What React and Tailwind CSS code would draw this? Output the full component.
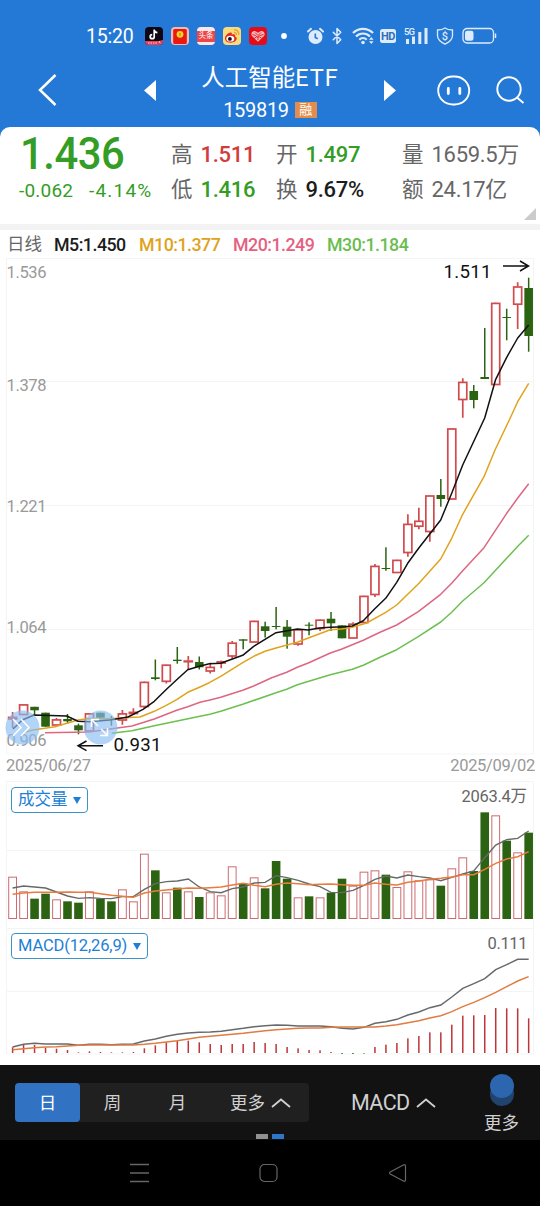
import React from 'react';
import { Bluetooth } from 'lucide-react';

const STEP = 10.98;
const X0 = 12.6;
const xAt = (i) => X0 + i * STEP;

const RED = '#d14b4e';
const GREEN = '#2c6313';

// [direction, high, body top, body bottom, low]
const CANDLES = [
  ['up', 712, 717, 719, 728], ['up', 704.5, 704.5, 714.5, 714.5], ['down', 706.8, 706.8, 710.3, 714.7],
  ['down', 712.7, 712.7, 726.7, 726.7], ['up', 718, 719.5, 725, 725], ['down', 714, 719, 721.3, 723.7],
  ['down', 723.7, 725.3, 730.3, 734.3], ['up', 713, 713.5, 731, 731], ['down', 712.7, 712.7, 717.7, 717.7],
  ['down', 716, 718, 719.3, 725.7], ['up', 710, 713.5, 720, 724.7], ['up', 708.3, 712, 713.5, 715],
  ['up', 681.5, 682, 706.5, 708], ['down', 659.5, 677.3, 679, 680.3], ['up', 664.5, 664.8, 681.3, 683.5],
  ['down', 647, 659.7, 661, 663.7], ['up', 656, 660.7, 661.7, 669.3], ['down', 656.5, 662, 667.3, 669.5],
  ['up', 662.7, 667, 671, 673.5], ['up', 660.5, 661.5, 663, 668.3], ['up', 641, 642.8, 656, 658.7],
  ['down', 639.3, 639.3, 640.7, 649.3], ['up', 620.7, 621, 642, 642], ['down', 621.7, 626.3, 631, 637.5],
  ['down', 607, 626, 627, 629.3], ['down', 620, 626.7, 636.7, 648.7], ['up', 629, 629.5, 644, 645.7],
  ['down', 622.3, 624.7, 625.7, 635.3], ['up', 619.3, 619.8, 628.5, 631], ['down', 612, 618.7, 623.3, 631],
  ['down', 625.3, 625.3, 638.3, 638.3], ['up', 622.3, 623.8, 638, 638], ['up', 595.7, 596, 622.5, 622.5],
  ['up', 564, 566, 594.5, 597], ['down', 547.3, 568, 569, 570.7], ['up', 559.7, 560, 572.5, 572.5],
  ['up', 514.3, 524, 552.5, 556.7], ['up', 507.7, 520.9, 526.2, 529.3], ['up', 495.3, 495.6, 531.5, 541.7],
  ['down', 479, 495, 499, 506.7], ['up', 428.3, 428.6, 499, 499], ['up', 378.3, 382, 399.5, 417.7],
  ['down', 385, 391, 400, 408.3], ['down', 328, 377, 379, 379], ['up', 302.7, 303, 384.5, 384.5],
  ['down', 308.7, 317, 318, 340.3], ['up', 282.3, 286.6, 304.2, 329], ['down', 277.7, 288, 336, 351.7],
];

const M5 = '13,729 22.3,720 34,715 66.7,716 78,721.3 89,721.7 110,720 128,717 143,709.3 154.3,701.3 165.7,690 176.7,679.7 187.7,669.7 198.5,666.5 209.3,663.7 220.7,663.3 231.7,659.3 242.7,655.3 253.7,646.3 276,632.7 297.3,629 308.3,630 319.3,628 330.3,627.3 345,626.7 352.3,626 363.3,620.7 374.3,609.3 385.7,598.3 396.7,582.3 407.7,563.3 419,547.7 440.7,520 451.7,493.3 462.7,465 484.7,418 495.7,379.3 506.7,357.3 517.7,338 528.7,325';
const M10 = '25,732 33,730 55,726.7 78,720 89,718.5 110,718.7 128,717.5 140,717 154.3,711.3 165.7,705.7 176.7,699.7 187.7,692.3 198.3,687.7 209.3,682.7 220.7,676.3 242.7,662.7 253.7,656.3 265,651.3 276,648 297.3,642.3 308.3,638 330.3,629.7 341.3,629 352.3,627.3 366.7,623 385.7,612.3 396.7,605 419,583.3 440.7,559 451.7,538.3 462.7,514.3 484,476.7 495,450 509.3,420 517.7,401.7 528.7,383.3';
const M20 = '45,732.7 89,732 110,729 132,726 154.3,719 176.7,710.3 187.7,706.7 200,702.3 210,700 220.7,697.3 242.7,690.3 253.7,686 271.7,677.7 286.7,672.3 297.3,667.3 308.3,663 330.3,653 341.3,649.3 363.3,640.3 380,632.3 396.7,625 418.3,611.7 440.7,594.3 451.7,583.3 462.7,570.7 484,547.7 506.7,513.3 518.3,497.3 528.7,483.7';
const M30 = '111.7,733.3 132,730.7 154.3,725.7 200,716.3 210,714.3 220.7,711.3 242.7,704.3 276,692.7 286.7,689.3 297.3,684.7 330.3,674.7 352.3,669.3 363.3,665.3 380,657.3 396.7,649.7 418.3,636.7 440.7,622 451.7,612.3 462.7,601 484,582.7 518.3,545.7 528.7,535.3';

// heights above each baseline, in thirds of a pixel
const VOLUME = [127, 83, 61, 76, 59, 53, 49, 83, 61, 53, 89, 53, 196, 146, 80, 94, 83, 66, 80, 71, 158, 106, 125, 92, 174, 121, 65, 68, 65, 79, 121, 100, 142, 146, 133, 96, 143, 116, 119, 100, 152, 185, 144, 320, 311, 235, 200, 259];
const VOL_MA5 = [93, 99, 96, 93, 81, 69, 62, 64, 62, 61, 67, 67, 89, 106, 112, 114, 120, 96, 82, 79, 91, 96, 108, 110, 130, 124, 116, 105, 97, 80, 79, 86, 101, 119, 129, 123, 132, 127, 123, 115, 125, 135, 144, 184, 222, 238, 242, 264];
const VOL_MA10 = [74, 78, 80, 80, 80, 81, 80, 80, 76, 71, 68, 65, 78, 84, 87, 90, 93, 92, 94, 96, 102, 107, 101, 97, 104, 108, 106, 103, 104, 105, 103, 101, 101, 108, 104, 102, 110, 114, 119, 122, 126, 133, 133, 149, 167, 180, 187, 202];
const HIST = [17, 24, 24, 16, 13, 9, 2, 5, 3, 2, 2, 3, 14, 23, 32, 37, 37, 32, 27, 24, 27, 27, 33, 30, 27, 18, 14, 9, 8, 3, -3, -3, -2, 18, 25, 30, 44, 51, 62, 62, 85, 112, 113, 114, 135, 134, 134, 104];
const DIF = [18, 26, 29, 27, 27, 27, 23, 26, 26, 25, 26, 27, 36, 42, 50, 56, 60, 62, 63, 65, 70, 74, 79, 82, 84, 83, 81, 81, 81, 79, 74, 72, 77, 89, 94, 101, 114, 123, 136, 144, 168, 194, 208, 223, 250, 265, 281, 281];
const DEA = [10, 13, 16, 18, 19, 21, 23, 24, 24, 24, 24, 24, 26, 29, 33, 37, 42, 47, 50, 53, 56, 59, 63, 67, 70, 72, 74, 75, 75, 77, 78, 78, 78, 78, 81, 85, 91, 97, 105, 112, 124, 139, 152, 166, 182, 199, 216, 229];

const toPoints = (values, base) => values.map((v, i) => `${xAt(i)},${base - v / 3}`).join(' ');

function StatusBar() {
  return (
    <div className="flex h-[54px] items-center pt-[18px] pl-[86px] text-white">
      <span className="w-[59px] pt-[2px] text-[19.5px] leading-none tracking-[-0.2px]">15:20</span>
      <div className="flex gap-2">
        <svg width="18" height="18" viewBox="0 0 18 18">
          <rect width="18" height="18" rx="4" fill="#0d0714" />
          <path d="M9.2 2.5v7.2a2 2 0 1 1-2-2M9.2 2.8c.3 1.8 1.4 2.6 3.2 2.8" fill="none" stroke="#fff" strokeWidth="1.7" />
          <path d="M0 14h14l4-1v1a4 4 0 0 1-4 4H4a4 4 0 0 1-4-4z" fill="#ee3b55" />
          <path d="M3 16h9M14 14.5l2 2" stroke="#fbd5dc" strokeWidth="1.1" strokeDasharray="1.5 1" />
        </svg>
        <svg width="18" height="18" viewBox="0 0 18 18">
          <rect width="18" height="18" rx="4" fill="#f4b8ae" />
          <rect x="2.2" y="2" width="13.6" height="15" rx="1.5" fill="#e8190e" />
          <circle cx="9" cy="7.3" r="3.4" fill="#fcd22c" />
          <path d="M8 5.8l1 1.5 1-1.5M9 7.3v2M8 7.8h2" stroke="#c58a10" strokeWidth=".7" fill="none" />
        </svg>
        <div className="flex h-[18px] w-[18px] items-center overflow-hidden rounded-[4px] bg-[#f9e9ea]">
          <span className="flex h-[11px] w-full items-center justify-center bg-[#ee4547] text-[7.5px] leading-none">头条</span>
        </div>
        <svg width="18" height="18" viewBox="0 0 18 18">
          <rect width="18" height="18" rx="4" fill="#fadb7c" />
          <path d="M2 11.3C2.2 8 6.4 4.7 8.3 5.6c.8.4.5 1.5.3 2 1.5-.6 3.3-.7 3.5.6.1.7-.2 1.2 0 1.4 3 1 2 5.9-4.5 6.1C4.2 15.7 1.9 13.8 2 11.3z" fill="#e02a22" />
          <ellipse cx="7.3" cy="11.7" rx="4" ry="2.9" fill="#fff" />
          <circle cx="6.9" cy="11.9" r="1.9" fill="#161010" />
          <path d="M11 5.5c1.7-.2 2.7.9 2.4 2.5M11 3c3.2-.4 5.3 2 4.7 5" stroke="#ee9a2e" strokeWidth="1.2" fill="none" />
        </svg>
        <svg width="18" height="18" viewBox="0 0 18 18">
          <rect width="18" height="18" rx="4" fill="#e70b18" />
          <path d="M9 14.8L3 9C1.4 6.8 3 4 5.3 4 7 4 8.3 5 9 6c.7-1 2-2 3.7-2C15 4 16.6 6.8 15 9z" fill="#f7b8b4" />
          <path d="M3.5 7.5l3 1 2 2 2.5-2 3.5-1M6 5.5l3 3 3-3M5.5 11l2-1M12.5 11l-2-1M9 9v4" stroke="#e31622" strokeWidth=".9" fill="none" />
        </svg>
      </div>
      <svg className="ml-3.5" width="6" height="6"><circle cx="3" cy="3" r="2.9" fill="#fff" /></svg>
      <svg className="ml-5" width="17" height="18" viewBox="0 0 17 18">
        <circle cx="8.5" cy="10" r="7" fill="#deebfb" />
        <path d="M1 4.5L4 1.8M16 4.5l-3-2.7" stroke="#deebfb" strokeWidth="2" strokeLinecap="round" />
        <path d="M8.3 6.5v4l2.4 1.3" stroke="#2478d6" strokeWidth="1.6" fill="none" />
      </svg>
      <Bluetooth className="ml-[4px] text-[#deebfb]" size={18} strokeWidth={2} />
      <svg className="ml-[6px]" width="23" height="18" viewBox="0 0 23 18" fill="none" stroke="#deebfb" strokeWidth="2.2">
        <path d="M1 6C6.5.4 15.500.4 21 6" />
        <path d="M4 9.5c4-4 10-4 14 0" />
        <path d="M7.3 12.8c2.2-2.2 5.2-2.2 7.400 0" />
        <circle cx="11" cy="15.5" r="1.8" fill="#deebfb" stroke="none" />
        <path d="M17 12.800l2.300-2.800 2.300 2.800zM17 14.300l2.300 2.800 2.300-2.800z" fill="#deebfb" stroke="none" />
      </svg>
      <span className="ml-[5px] flex h-[14px] w-4 items-center justify-center rounded-[2.5px] bg-[#deebfb] text-[11px] leading-none font-bold tracking-[-0.5px] text-[#2d6fb8]">HD</span>
      <svg className="ml-2" width="24" height="18" viewBox="0 0 24 18" fill="#deebfb">
        <text x="0" y="8" fontSize="9.5" fontWeight="600" textLength="11">5G</text>
        <rect x="2" y="12" width="3" height="5" /><rect x="8" y="9.5" width="3" height="7.5" />
        <rect x="14.3" y="5" width="3" height="12" /><rect x="20.5" y="1" width="3" height="16" />
      </svg>
      <svg className="ml-[8px]" width="18" height="18" viewBox="0 0 18 18" fill="none" stroke="#deebfb" strokeWidth="1.3">
        <path d="M9 1c2 1.5 4.5 2 7.5 2v5.500c0 4-3 6.500-7.500 8.700-4.500-2.200-7.500-4.700-7.500-8.700V3C4.500 3 7 2.500 9 1z" />
        <text x="9" y="12.800" textAnchor="middle" fontSize="11" fontWeight="500" fill="#deebfb" stroke="none">$</text>
      </svg>
      <svg className="ml-[8px]" width="35" height="18" viewBox="0 0 35 18">
        <rect x="1" y="1.5" width="30.5" height="14.5" rx="4" fill="none" stroke="#deebfb" strokeWidth="1.3" />
        <rect x="3" y="3.8" width="8.5" height="10" rx="2.2" fill="#deebfb" />
        <path d="M33.500 6.500v4.500" stroke="#deebfb" strokeWidth="1.5" />
      </svg>
    </div>
  );
}

function Header() {
  return (
    <header className="flex h-[73px] items-start text-white">
      <svg className="mt-[19px] ml-[37px]" width="20" height="34" viewBox="0 0 20 34">
        <path d="M18.500 2L3 17l15.500 15" fill="none" stroke="#fff" strokeWidth="2.5" />
      </svg>
      <svg className="mt-[26px] ml-[87px]" width="12" height="21"><path d="M12 0v21L0 10.500z" fill="#fff" /></svg>
      <div className="ml-[34px] flex w-[160px] flex-col items-center">
        <h1 className="mt-[9px] text-[23.5px] leading-[30px] whitespace-nowrap">人工智能<span className="tracking-[0.9px]">ETF</span></h1>
        <div className="mt-[5px] flex items-center gap-[6px]">
          <span className="pt-px text-[20px] leading-[22px] tracking-[-0.3px]">159819</span>
          <span className="flex h-[16px] w-[22px] items-center justify-center bg-[#e28d4c] text-[13px] leading-none">融</span>
        </div>
      </div>
      <svg className="mt-[26px] ml-[34px]" width="12" height="21"><path d="M0 0v21l12-10.500z" fill="#fff" /></svg>
      <svg className="mt-[21px] ml-[41px]" width="34" height="32" viewBox="0 0 34 32" fill="none" stroke="#fff">
        <rect x="1.2" y="1.5" width="31" height="28" rx="14.5" strokeWidth="1.9" />
        <path d="M11.300 13.500v5M22.800 13.500v5" strokeWidth="2.8" strokeLinecap="round" />
      </svg>
      <svg className="mt-[22px] ml-[25px]" width="30" height="30" viewBox="0 0 30 30" fill="none" stroke="#fff" strokeWidth="1.9">
        <circle cx="13" cy="13" r="11.7" />
        <path d="M21 21.500l6.500 5.500" />
      </svg>
    </header>
  );
}

function Stat({ label, value, color }) {
  return (
    <div className="flex h-[35px] items-center gap-[8px] whitespace-nowrap">
      <span className="text-[21.5px] leading-none text-[#666]">{label}</span>
      <span className={`text-[22px] leading-none tracking-[-0.3px] ${color}`}>{value}</span>
    </div>
  );
}

function Quote() {
  return (
    <section className="relative flex h-[97px] items-start rounded-t-[10px] bg-white">
      <div className="ml-[19px] w-[152px] text-[#349d26]">
        <div className="mt-[5px] ml-px origin-left scale-x-[0.93] text-[45px] leading-[43px] font-medium tracking-[-0.5px]">1.436</div>
        <div className="mt-[5px] flex text-[19px] leading-[22px]">
          <span className="w-[70px] shrink-0 tracking-[0.2px]">-0.062</span>
          <span className="tracking-[1.2px]">-4.14%</span>
        </div>
      </div>
      <div className="mt-[10px] w-[105px]">
        <Stat label="高" value="1.511" color="font-medium text-[#d13c3c]" />
        <Stat label="低" value="1.416" color="font-medium text-[#349d26]" />
      </div>
      <div className="mt-[10px] w-[126px]">
        <Stat label="开" value="1.497" color="font-medium text-[#349d26]" />
        <Stat label="换" value="9.67%" color="font-medium text-[#1c1c1c]" />
      </div>
      <div className="mt-[10px]">
        <Stat label="量" value="1659.5万" color="text-[#666]" />
        <Stat label="额" value="24.17亿" color="text-[#666]" />
      </div>
      <svg className="absolute right-[4px] bottom-[4px]" width="12" height="12"><path d="M12 0v12H0z" fill="#cbcbcb" /></svg>
    </section>
  );
}

function Averages() {
  return (
    <div className="flex h-[28px] items-center pt-[2px] pl-[7px] text-[17.8px] leading-none font-medium tracking-[-0.5px] whitespace-nowrap">
      <span className="w-[47px] text-[17.5px] font-normal tracking-normal text-[#666]">日线</span>
      <span className="w-[85px] text-[#1c1c1c]">M5:1.450</span>
      <span className="w-[94px] text-[#e0a21c]">M10:1.377</span>
      <span className="w-[94px] text-[#e5617f]">M20:1.249</span>
      <span className="text-[#6abd4e]">M30:1.184</span>
    </div>
  );
}

function Candle({ data, x }) {
  const [dir, high, top, bottom, low] = data;
  if (dir === 'down') {
    return (
      <g fill={GREEN}>
        <rect x={x - 0.75} y={high} width="1.5" height={low - high} />
        <rect x={x - 4.3} y={top} width="8.6" height={bottom - top} />
      </g>
    );
  }
  return (
    <g stroke={RED} strokeWidth="1.7" fill="none">
      <path d={`M${x} ${high}V${top}M${x} ${bottom}V${low}`} />
      <rect x={x - 4} y={top + 0.4} width="8" height={Math.max(bottom - top - 0.4, 0.3)} />
    </g>
  );
}

function PriceChart() {
  const ticks = [['1.536', 278], ['1.378', 391], ['1.221', 512], ['1.064', 633], ['0.906', 746]];
  return (
    <svg className="block" width="540" height="497" viewBox="0 258 540 497">
      <g stroke="#f3f5f5" fill="none">
        <path d="M6.500 258.500h527v495.500h-527zM6 381.500h527M6 505.500h527M6 629.500h527" />
      </g>
      {CANDLES.map((c, i) => <Candle key={i} data={c} x={xAt(i)} />)}
      <g fill="none" strokeWidth="1.5" strokeLinejoin="round">
        <polyline points={M30} stroke="#6cc04f" />
        <polyline points={M20} stroke="#dd6682" />
        <polyline points={M10} stroke="#e0a31d" />
        <polyline points={M5} stroke="#111" />
      </g>
      <g fill="#999" fontSize="16.5">
        {ticks.map(([label, y]) => (
          <text key={label} x="6.5" y={y} textLength="40">{label}</text>
        ))}
      </g>
      <g fill="#89bdf2" fillOpacity=".65">
        <circle cx="22.5" cy="727.5" r="17" />
        <circle cx="100.5" cy="727.5" r="17" />
      </g>
      <g fill="none" stroke="#fff" strokeWidth="1.5">
        <path d="M13 719l8 8.500-8 8.500M21 719l8 8.500-8 8.500" />
        <path d="M91.500 727v-7.500h7.500M91.500 719.500l6.500 6.500M107.500 728v7.500h-7.500M107.500 735.500l-6.500-6.500" />
      </g>
      <g fill="none" stroke="#111" strokeWidth="1.5">
        <path d="M103 745.800H78.500M86.500 741l-8.500 4.800 8.500 4.800" />
        <path d="M503 266h25M520 261l8.500 5-8.500 5" />
      </g>
      <g fill="#111" fontSize="18.7">
        <text x="113.5" y="751" textLength="48">0.931</text>
        <text x="443.5" y="277.5" textLength="48">1.511</text>
      </g>
    </svg>
  );
}

function IndicatorButton({ children, className }) {
  return (
    <button className={`absolute left-[11px] flex h-[26px] items-center justify-between rounded-[4px] border border-[#3a94c8] px-[6px] leading-none whitespace-nowrap text-[#1d7fd6] ${className}`}>
      <span className="pt-px">{children}</span>
      <svg width="8" height="7"><path d="M0 0h8L4 7z" fill="#1d7fd6" /></svg>
    </button>
  );
}

function VolumeChart() {
  return (
    <div className="relative h-[147px]">
      <svg className="block" width="540" height="147" viewBox="0 781 540 147">
        <path d="M6.500 928V781.500h527V928M6 850.500h527" stroke="#f3f5f5" fill="none" />
        {VOLUME.map((v, i) => {
          const y = 919 - v / 3;
          return CANDLES[i][0] === 'down'
            ? <rect key={i} x={xAt(i) - 4.3} y={y} width="8.6" height={v / 3} fill={GREEN} />
            : <rect key={i} x={xAt(i) - 3.9} y={y + 0.5} width="7.8" height={v / 3 - 1} fill="none" stroke="#cd6b70" />;
        })}
        <polyline points={toPoints(VOL_MA5, 919)} fill="none" stroke="#666a66" strokeWidth="1.4" />
        <polyline points={toPoints(VOL_MA10, 919)} fill="none" stroke="#e87b3e" strokeWidth="1.5" />
        <text x="461.5" y="802" fontSize="16.5" fill="#666" textLength="65.5">2063.4万</text>
      </svg>
      <IndicatorButton className="top-[6px] w-[77px] text-[16.5px]">成交量</IndicatorButton>
    </div>
  );
}

function MacdChart() {
  return (
    <div className="relative h-[137px]">
      <svg className="block" width="540" height="137" viewBox="0 928 540 137">
        <path d="M6.500 928.500h527v125.500h-527zM6 991.500h527" stroke="#f3f5f5" fill="none" />
        {HIST.map((v, i) => (
          <rect
            key={i}
            x={xAt(i) - 0.75}
            y={v > 0 ? 1053 - v / 3 : 1053}
            width="1.5"
            height={Math.abs(v) / 3}
            fill={v > 0 ? '#bd3639' : '#2c7a20'}
          />
        ))}
        <polyline points={toPoints(DIF, 1053)} fill="none" stroke="#666a6c" strokeWidth="1.5" />
        <polyline points={toPoints(DEA, 1053)} fill="none" stroke="#e07b42" strokeWidth="1.5" />
        <text x="487.5" y="948.5" fontSize="16.5" fill="#666" textLength="40">0.111</text>
      </svg>
      <IndicatorButton className="top-[5px] w-[137px] text-[16.5px] tracking-[-0.15px]">MACD(12,26,9)</IndicatorButton>
    </div>
  );
}

function Caret() {
  return (
    <svg width="20" height="10" viewBox="0 0 20 10">
      <path d="M1 9l9-7.500L19 9" fill="none" stroke="#d0d0d0" strokeWidth="1.8" />
    </svg>
  );
}

function Toolbar() {
  return (
    <footer className="relative flex h-[75px] bg-[#121212] text-[#d0d0d0]">
      <div className="mt-[18px] ml-[15px] flex h-[39px] w-[294px] items-center rounded-[4px] bg-[#202020] text-[17.5px] leading-none">
        <button className="h-full w-[65px] rounded-[4px] bg-[#3173c2] pt-[2px] text-white">日</button>
        <button className="w-[65px] pt-[2px]">周</button>
        <button className="w-[65px] pt-[2px]">月</button>
        <button className="ml-5 flex items-center gap-[6px]"><span className="pt-[2px]">更多</span><Caret /></button>
      </div>
      <button className="mt-[18px] ml-[42px] flex h-[39px] items-center gap-[6px] text-[21.5px] leading-none tracking-[-0.6px]">
        <span className="pt-px">MACD</span><Caret />
      </button>
      <button className="mt-[9px] ml-[48px] flex w-[36px] flex-col items-center text-[17.5px] leading-none">
        <svg width="24" height="32" viewBox="0 0 24 32">
          <circle cx="12" cy="20" r="12" fill="#21446f" />
          <circle cx="12" cy="12" r="12" fill="#2c66ae" />
        </svg>
        <span className="mt-[9px] whitespace-nowrap">更多</span>
      </button>
      <div className="absolute bottom-[1px] left-[256px] flex gap-[4px]">
        <i className="h-[5px] w-3 bg-[#919191]" />
        <i className="h-[5px] w-3 bg-[#2e76c9]" />
      </div>
    </footer>
  );
}

function SystemNav() {
  return (
    <nav className="flex h-[66px] bg-black pt-[23px] pl-[130px]">
      <svg width="19" height="20" viewBox="0 0 19 20"><path d="M0 1.500h19M0 10h19M0 18.500h19" stroke="#666" strokeWidth="1.3" /></svg>
      <svg className="ml-[110px]" width="19" height="20" viewBox="0 0 19 20"><rect x="1" y="1.5" width="17" height="17" rx="4.5" fill="none" stroke="#666" strokeWidth="1.2" /></svg>
      <svg className="ml-[110px]" width="19" height="20" viewBox="0 0 19 20">
        <path d="M15.800 1.800L2.200 9q-1.400 1 0 2l13.600 7.200q1.700.4 1.700-1.300V3.100q0-1.700-1.700-1.300z" fill="none" stroke="#666" strokeWidth="1.2" />
      </svg>
    </nav>
  );
}

export default function App() {
  return (
    <div className="w-[540px] overflow-hidden bg-white font-['Roboto','Noto_Sans_CJK_SC',sans-serif]">
      <div className="bg-[#2478d6]">
        <StatusBar />
        <Header />
        <Quote />
      </div>
      <div className="h-[6px] bg-[#f3f3f3]" />
      <Averages />
      <PriceChart />
      <div className="flex h-[26px] items-center justify-between pr-[5px] pb-[4px] pl-[6px] text-[16.5px] leading-none tracking-[-0.3px] text-[#999]">
        <span>2025/06/27</span>
        <span>2025/09/02</span>
      </div>
      <VolumeChart />
      <MacdChart />
      <Toolbar />
      <SystemNav />
    </div>
  );
}
